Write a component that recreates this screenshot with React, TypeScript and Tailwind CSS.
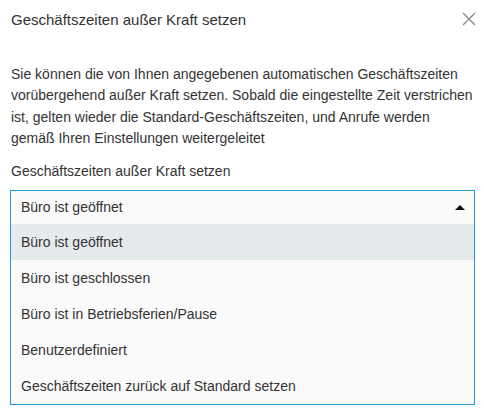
import { useState } from 'react';

const options = [
  'Büro ist geöffnet',
  'Büro ist geschlossen',
  'Büro ist in Betriebsferien/Pause',
  'Benutzerdefiniert',
  'Geschäftszeiten zurück auf Standard setzen',
];

const App = () => {
  const [selected, setSelected] = useState(options[0]);

  return (
    <div className="w-[484px] h-[410px] bg-white pl-[10px] pr-[9px] text-[14px] text-[#333] font-['Liberation_Sans',Arial,sans-serif]">
      {/* HEADER */}
      <div className="h-[40px] flex items-center justify-between">
        <span className="pl-[1px] text-[15px] leading-[20px]">Geschäftszeiten außer Kraft setzen</span>
        <button className="w-[14px] h-[14px] mr-[-1px] mt-[-2px] text-[#8a8a8a]">
          <svg viewBox="0 0 14 14" width="14" height="14" stroke="currentColor" strokeWidth="1.4">
            <path d="M1 1 L13 13 M13 1 L1 13" />
          </svg>
        </button>
      </div>

      {/* DESCRIPTION */}
      <p className="mt-[24px] pl-[1px] leading-[21.3px]">
        Sie können die von Ihnen angegebenen automatischen Geschäftszeiten vorübergehend außer Kraft setzen. Sobald die
        eingestellte Zeit verstrichen ist, gelten wieder die Standard-Geschäftszeiten, und Anrufe werden gemäß Ihren
        Einstellungen weitergeleitet
      </p>

      <div className="mt-[12px] pl-[1px] leading-[20px]">Geschäftszeiten außer Kraft setzen</div>

      {/* SELECT */}
      <div className="mt-[9px] border border-[#1a9ad6] bg-[#fafafa]">
        <div className="h-[33px] flex items-center justify-between pl-[10px] pr-[9px]">
          <span>{selected}</span>
          <svg width="10" height="5" viewBox="0 0 10 5" className="mt-[-1px]">
            <path d="M0 5 L5 0 L10 5 Z" fill="#111" />
          </svg>
        </div>
        <ul>
          {options.map((opt) => (
            <li
              key={opt}
              onClick={() => setSelected(opt)}
              className={`h-[36px] flex items-center pl-[10px] cursor-pointer ${
                opt === selected ? 'bg-[#e5eaed]' : ''
              }`}
            >
              {opt}
            </li>
          ))}
        </ul>
      </div>
    </div>
  );
};

export default App;
